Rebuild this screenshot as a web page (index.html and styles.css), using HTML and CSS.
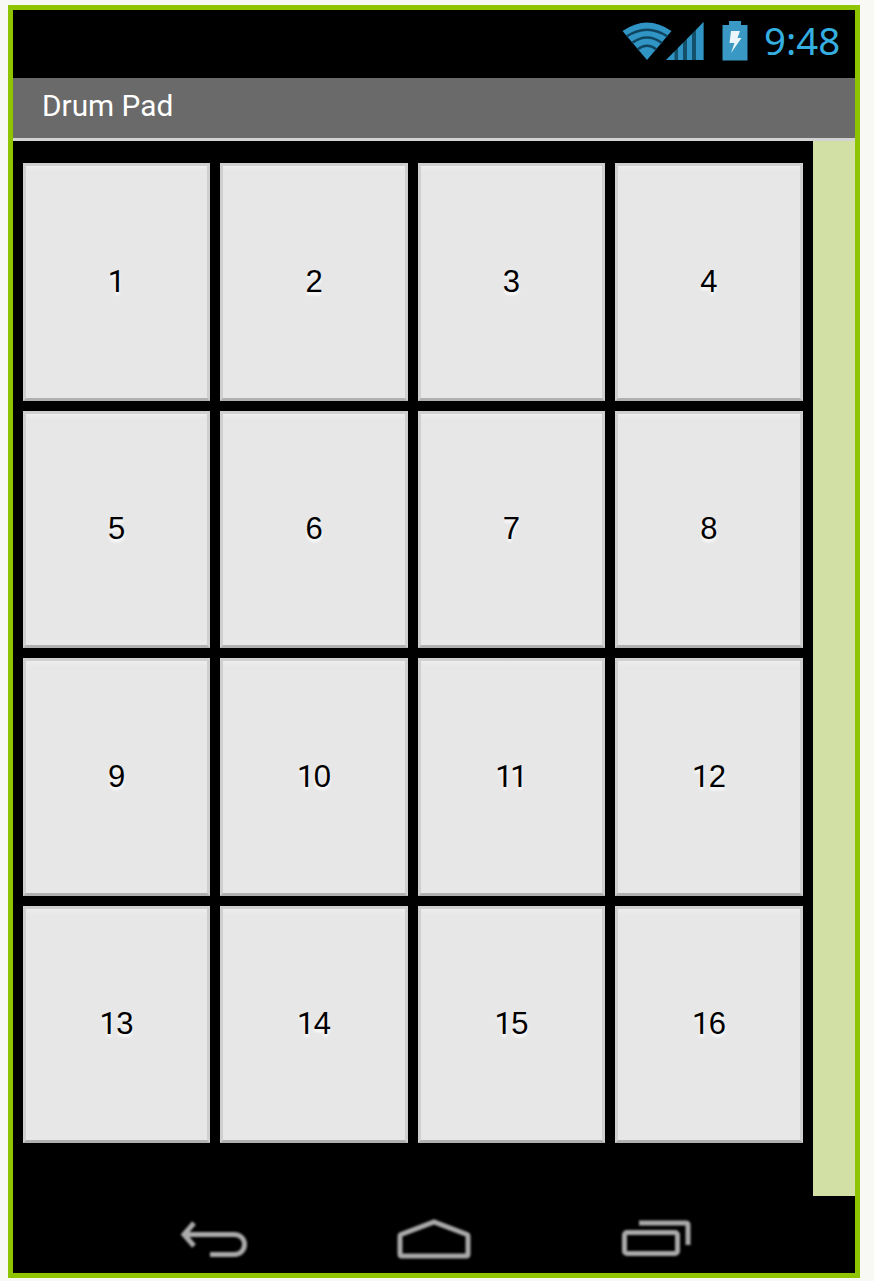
FILE: index.html
```
<!DOCTYPE html>
<html lang="en">
<head>
<meta charset="utf-8">
<title>Drum Pad</title>
<link rel="stylesheet" href="styles.css">
</head>
<body>
<div class="device">
  <header class="status">
    <svg class="wifi" width="50" height="38" viewBox="0 0 50 38">
      <path class="wifi-base" d="M.5 9Q25-8 49.500 9L25 38Z"/>
      <g class="wifi-gaps">
        <path d="M4.500 14.500Q25 1 45.500 14.500"/>
        <path d="M10 21Q25 10 40 21"/>
        <path d="M15.500 27.500Q25 20 34.500 27.500"/>
      </g>
    </svg>
    <svg class="signal" width="38" height="38" viewBox="0 0 38 38">
      <path class="signal-base" d="M0 38L37.500 0V38Z"/>
      <path class="signal-bars" d="M0 38L8.500 29.500V38ZM12 38V26L17 21V38ZM21 38V17L26 12V38ZM30 38V8L37.500 0V38Z"/>
    </svg>
    <svg class="battery" width="26" height="40" viewBox="0 0 26 40">
      <path class="battery-body" d="M.5 4H7V0H19V4H25.500V39.500H.5Z"/>
      <path class="battery-bolt" d="M9 10H18L15.500 17H19.500L9 32L12.500 22H7.500Z"/>
    </svg>
    <span class="clock">9:48</span>
  </header>
  <div class="title">Drum Pad</div>
  <main class="screen">
    <div class="pads">
      <button class="pad"><span class="one">1</span></button>
      <button class="pad">2</button>
      <button class="pad">3</button>
      <button class="pad">4</button>
      <button class="pad">5</button>
      <button class="pad">6</button>
      <button class="pad">7</button>
      <button class="pad">8</button>
      <button class="pad">9</button>
      <button class="pad"><span class="one">1</span>0</button>
      <button class="pad"><span class="one tight">1</span><span class="one">1</span></button>
      <button class="pad"><span class="one">1</span>2</button>
      <button class="pad"><span class="one">1</span>3</button>
      <button class="pad"><span class="one">1</span>4</button>
      <button class="pad"><span class="one">1</span>5</button>
      <button class="pad"><span class="one">1</span>6</button>
    </div>
    <div class="side"></div>
  </main>
  <nav class="nav">
    <svg class="back" width="68" height="40" viewBox="0 0 68 40">
      <path d="M14 5L4 16.500L14 28M5 16.500H54C68 16.500 68 36.500 54 36.500H30"/>
    </svg>
    <svg class="home" width="74" height="42" viewBox="0 0 74 42">
      <path d="M3 18Q3 17 4 16.500L37 4L70 16.500Q71 17 71 18V36Q71 38 69 38H5Q3 38 3 36Z"/>
    </svg>
    <svg class="recent" width="70" height="40" viewBox="0 0 70 40">
      <rect x="2.500" y="14.500" width="53" height="21" rx="2.500"/>
      <path d="M17 5H64Q66 5 66 7V27"/>
    </svg>
  </nav>
</div>
</body>
</html>
```
FILE: styles.css
```
* { box-sizing: border-box; }

body {
  margin: 0;
  padding: 5px 8px 0;
  background: #f8f9f4;
  overflow: hidden;
}

.device {
  display: flex;
  flex-direction: column;
  width: 852px;
  height: 1273px;
  border: 5px solid #8fc400;
  background: #000;
}

.status {
  display: flex;
  height: 68px;
  padding-top: 11px;
  padding-left: 609px;
}

.status svg { flex: none; filter: blur(0.7px); }
.wifi { margin-top: 1px; }
.wifi-base { fill: #3094c4; }
.wifi-gaps { fill: none; stroke: #104560; stroke-width: 2.6; }
.signal { margin-top: 1px; margin-left: -6px; }
.signal-base { fill: #15506a; }
.signal-bars { fill: #3094c4; }
.battery { margin-left: 18px; }
.battery-body { fill: #3998c4; }
.battery-bolt { fill: #eaf6fa; }

.clock {
  margin-left: 16px;
  color: #35aee0;
  font: 38.5px/39px "Noto Sans", sans-serif;
}

.title {
  height: 63px;
  padding-left: 29px;
  border-bottom: 3px solid #d2d2d2;
  background: #6a6a6a;
  color: #fff;
  font: 29.8px/56px Roboto, sans-serif;
}

.screen {
  display: flex;
  justify-content: space-between;
  height: 1055px;
}

.pads {
  display: grid;
  grid-template-columns: repeat(4, 187.45px);
  grid-template-rows: repeat(4, 237.5px);
  gap: 10px;
  padding: 22px 0 0 10px;
}

.pad {
  margin: 0;
  padding: 0 1px 0 0;
  border: 3px solid #cfcfcf;
  border-bottom-color: #b0b0b0;
  background: linear-gradient(#eeeeee, #e7e7e7 5px);
  color: #000;
  font: 31px/36px "Liberation Sans", Arial, sans-serif;
  letter-spacing: -0.7px;
  text-shadow: 0 3px 3px #fff;
}

.one { font-family: Roboto, sans-serif; }
.tight { letter-spacing: -2.5px; }

.side { width: 42px; background: #d2e0a6; }

.nav {
  display: flex;
  height: 77px;
  padding-top: 22px;
  padding-left: 167px;
}

.nav svg {
  flex: none;
  fill: none;
  stroke: #aaa;
  stroke-width: 5;
  filter: blur(0.8px);
}

.home { margin-left: 149px; }
.recent { margin-left: 151px; }
```
